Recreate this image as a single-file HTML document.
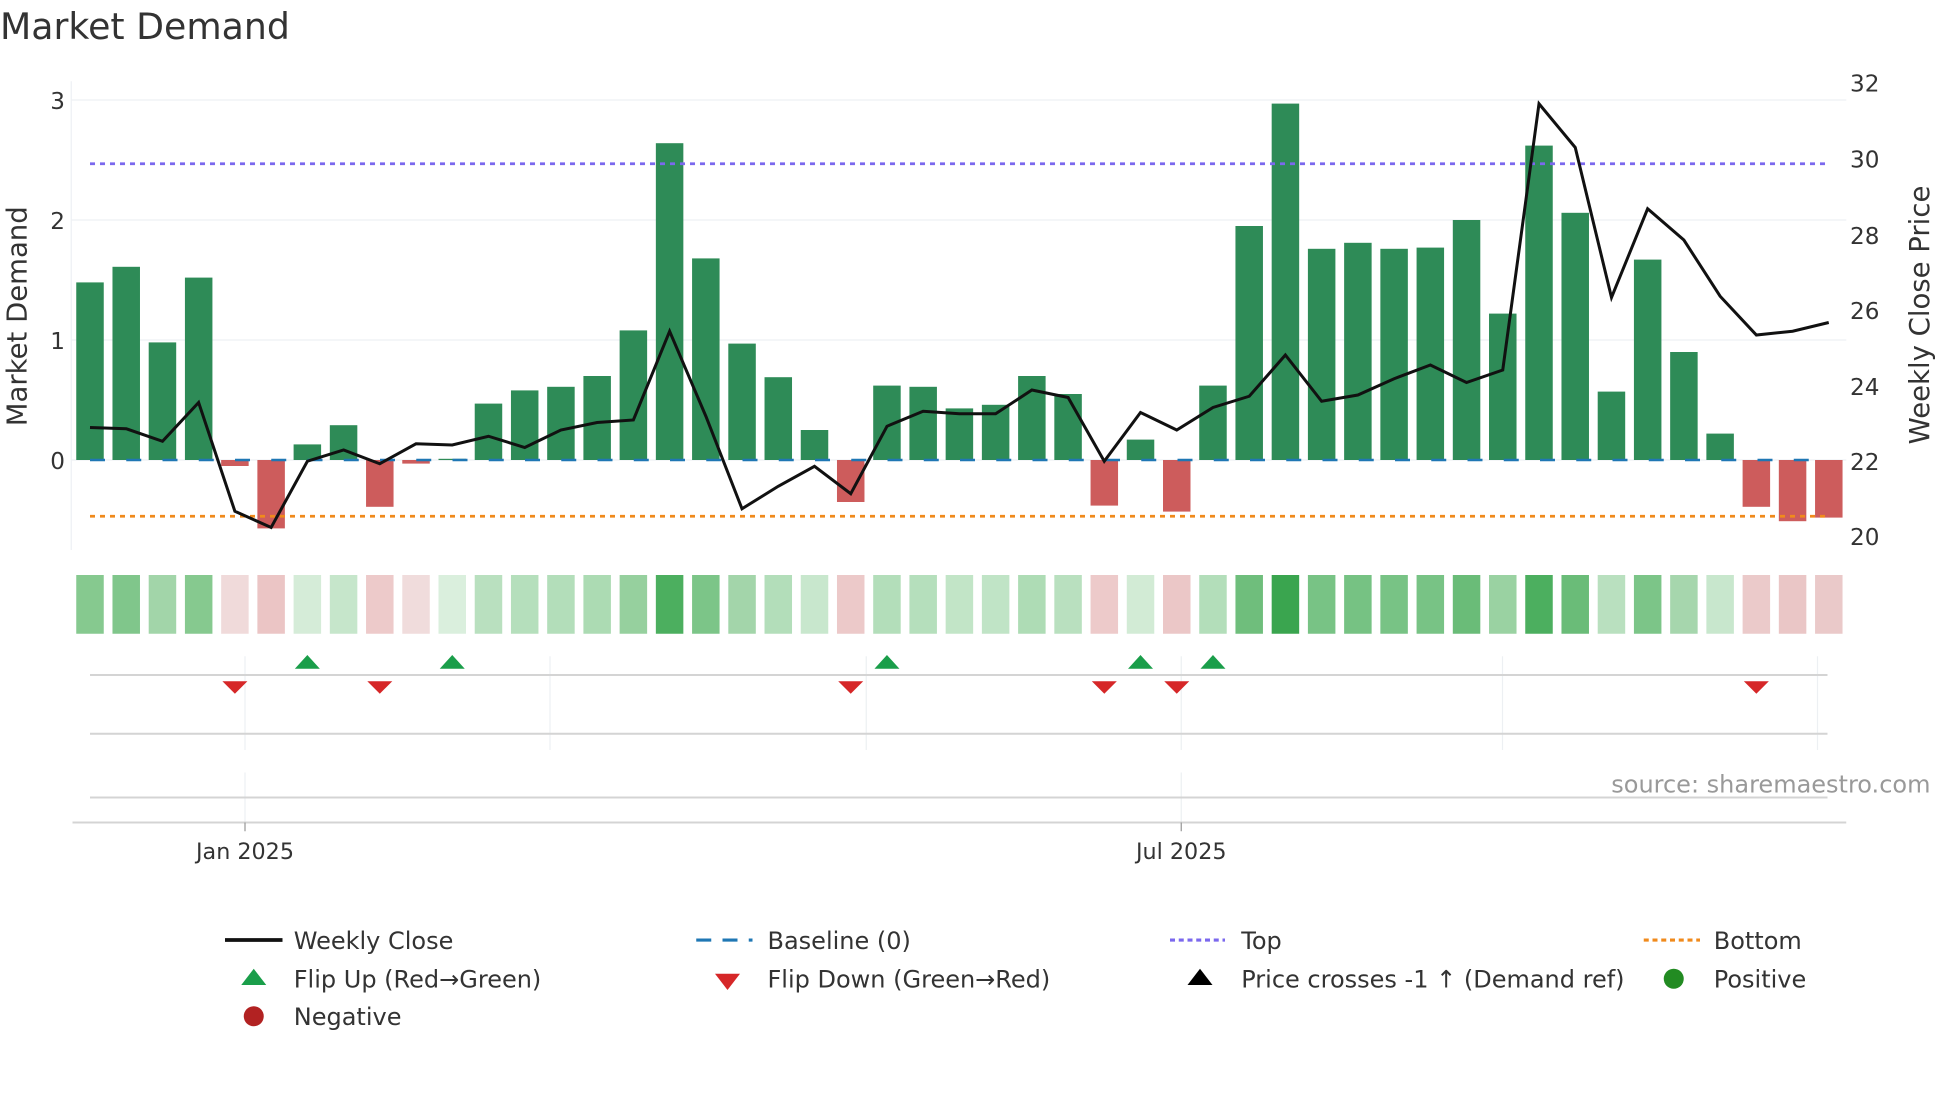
<!DOCTYPE html>
<html><head><meta charset="utf-8"><style>
html,body{margin:0;padding:0;background:#fff;overflow:hidden}
svg{display:block}
text{font-family:"DejaVu Sans","Liberation Sans",sans-serif;fill:#333}
</style></head><body>
<svg id="s" width="1960" height="1102" viewBox="0 0 1568 881.6" preserveAspectRatio="none" xmlns="http://www.w3.org/2000/svg">
<g id="grid" stroke="#eef0f4" stroke-width="1">
<line x1="57" y1="80" x2="1477" y2="80"/><line x1="57" y1="176" x2="1477" y2="176"/><line x1="57" y1="272" x2="1477" y2="272"/><line x1="57" y1="368" x2="1477" y2="368"/>
<line x1="57" y1="65" x2="57" y2="440"/>
</g>
<g id="bars"></g>
<line x1="72" y1="368" x2="1462" y2="368" stroke="#1f77b4" stroke-width="2" stroke-dasharray="12,17"/>
<line x1="72" y1="131" x2="1462" y2="131" stroke="#7b68ee" stroke-width="2.2" stroke-dasharray="4,4"/>
<line x1="72" y1="413" x2="1462" y2="413" stroke="#f08a1c" stroke-width="2.2" stroke-dasharray="4,4"/>
<polyline id="line" fill="none" stroke="#111" stroke-width="2.4"/>
<g id="heat"></g>
<g stroke="#edf0f3" stroke-width="1">
<line x1="196" y1="525" x2="196" y2="600"/><line x1="440" y1="525" x2="440" y2="600"/><line x1="693" y1="525" x2="693" y2="600"/><line x1="945" y1="525" x2="945" y2="600"/><line x1="1202" y1="525" x2="1202" y2="600"/><line x1="1454" y1="525" x2="1454" y2="600"/>
<line x1="196" y1="618" x2="196" y2="658"/><line x1="945" y1="618" x2="945" y2="658"/>
</g>
<g stroke="#d4d4d4" stroke-width="1.6">
<line x1="72" y1="540" x2="1462" y2="540"/><line x1="72" y1="587" x2="1462" y2="587"/><line x1="72" y1="638" x2="1462" y2="638"/>
<line x1="58" y1="658" x2="1477" y2="658"/>
</g>
<g stroke="#999" stroke-width="1"><line x1="196" y1="658" x2="196" y2="665"/><line x1="945" y1="658" x2="945" y2="665"/></g>
<g id="marks"></g>
<text x="0" y="31" font-size="29">Market Demand</text>
<g font-size="18.5" text-anchor="end"><text x="52" y="87">3</text><text x="52" y="183">2</text><text x="52" y="279">1</text><text x="52" y="375">0</text></g>
<g font-size="18.5"><text x="1480" y="73">32</text><text x="1480" y="134">30</text><text x="1480" y="195">28</text><text x="1480" y="255">26</text><text x="1480" y="316">24</text><text x="1480" y="376">22</text><text x="1480" y="436">20</text></g>
<text transform="translate(21,253) rotate(-90)" font-size="22" text-anchor="middle">Market Demand</text>
<text transform="translate(1543,252) rotate(-90)" font-size="22" text-anchor="middle">Weekly Close Price</text>
<text x="1289" y="634" font-size="19.2" fill="#999" style="fill:#999">source: sharemaestro.com</text>
<g font-size="17.8" text-anchor="middle"><text x="196" y="687">Jan 2025</text><text x="945" y="687">Jul 2025</text></g>
<g font-size="19.2">
<line x1="180" y1="752" x2="226" y2="752" stroke="#111" stroke-width="3"/><text x="235" y="759">Weekly Close</text>
<line x1="557" y1="752" x2="602" y2="752" stroke="#1f77b4" stroke-width="2.5" stroke-dasharray="12,9"/><text x="614" y="759">Baseline (0)</text>
<line x1="936" y1="752" x2="980" y2="752" stroke="#7b68ee" stroke-width="2.5" stroke-dasharray="4,3"/><text x="993" y="759">Top</text>
<line x1="1315" y1="752" x2="1360" y2="752" stroke="#f08a1c" stroke-width="2.5" stroke-dasharray="4,3"/><text x="1371" y="759">Bottom</text>
<polygon points="203,775 213,788 193,788" fill="#1a9e4a"/><text x="235" y="790">Flip Up (Red→Green)</text>
<polygon points="572,779 592,779 582,792" fill="#d62728"/><text x="614" y="790">Flip Down (Green→Red)</text>
<polygon points="960,775 970,788 950,788" fill="#000"/><text x="993" y="790">Price crosses -1 ↑ (Demand ref)</text>
<circle cx="1339" cy="783" r="8" fill="#228b22"/><text x="1371" y="790">Positive</text>
<circle cx="203" cy="813" r="8" fill="#b22222"/><text x="235" y="820">Negative</text>
</g>
</svg>
<script>
var v=[1.48,1.61,0.98,1.52,-0.05,-0.57,0.13,0.29,-0.39,-0.03,0.01,0.47,0.58,0.61,0.70,1.08,2.64,1.68,0.97,0.69,0.25,-0.35,0.62,0.61,0.43,0.46,0.70,0.55,-0.38,0.17,-0.43,0.62,1.95,2.97,1.76,1.81,1.76,1.77,2.00,1.22,2.62,2.06,0.57,1.67,0.90,0.22,-0.39,-0.51,-0.48];
var ly=[342,343,353,322,409,422,369,360,371,355,356,349,358,344,338,336,265,333,407,389,373,395,341,329,331,331,312,318,369,330,344,326,317,284,321,316,303,292,306,296,83,118,238,167,192,237,268,265,258];
var hc=["#86c98f","#80c68b","#a2d5a9","#86c98f","#f0dada","#ebc5c5","#d5ecd8","#c6e6cb","#edcaca","#f0dcdc","#daefdd","#b9e0bf","#b5dfbc","#b3deba","#acdbb3","#96d09e","#4caf5f","#7cc588","#a3d5aa","#b3deba","#c8e7cd","#ecc9c9","#b3deba","#b5dfbc","#c2e5c7","#c0e4c6","#aedcb5","#b9e0bf","#edcaca","#d2ebd5","#ebc7c7","#b3deba","#6fbe7c","#3aa54f","#78c385","#76c283","#78c385","#78c385","#6abc78","#9ad2a2","#4caf5f","#6abc78","#b9e0bf","#7cc588","#a6d6ad","#c8e7cd","#ebcaca","#eac6c6","#eac9c9"];
var NS="http://www.w3.org/2000/svg";
function el(t,a,p){var e=document.createElementNS(NS,t);for(var k in a)e.setAttribute(k,a[k]);document.getElementById(p).appendChild(e);}
var pts=[];
for(var i=0;i<49;i++){var cx=72+i*28.98;
var y0=368,y1=368-v[i]*96;
el("rect",{x:cx-11,y:Math.min(y0,y1),width:22,height:Math.max(1,Math.abs(y1-y0)),fill:v[i]>=0?"#2e8b57":"#cd5c5c"},"bars");
el("rect",{x:cx-11,y:460,width:22,height:47,fill:hc[i]},"heat");
pts.push(cx.toFixed(1)+","+ly[i]);}
document.getElementById("line").setAttribute("points",pts.join(" "));
[6,10,22,29,31].forEach(function(i){var c=72+i*28.98;el("polygon",{points:(c)+",524 "+(c+10)+",535 "+(c-10)+",535",fill:"#1a9e4a"},"marks");});
[4,8,21,28,30,46].forEach(function(i){var c=72+i*28.98;el("polygon",{points:(c-10)+",545 "+(c+10)+",545 "+c+",555",fill:"#d62728"},"marks");});
</script>
</body></html>
